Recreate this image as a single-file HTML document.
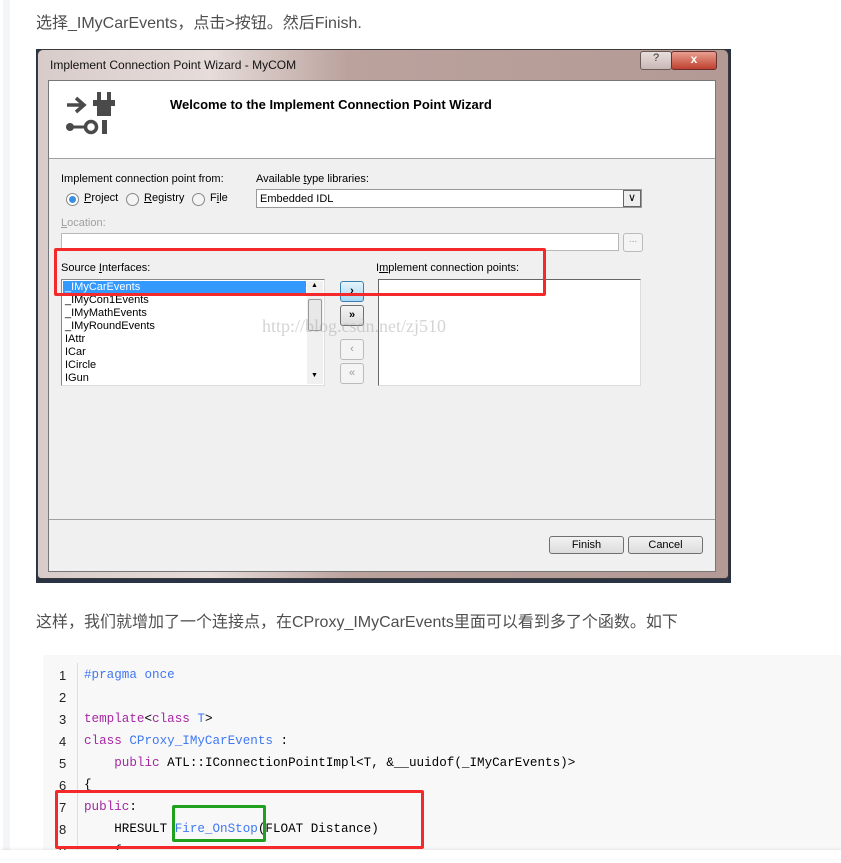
<!DOCTYPE html>
<html><head><meta charset="utf-8"><style>
body{margin:0;width:841px;height:859px;background:#fff;position:relative;overflow:hidden;font-family:"Liberation Sans","Noto Sans CJK SC",sans-serif}
.a{position:absolute}
.t{font-size:11px;font-family:"Liberation Sans",sans-serif;color:#000;white-space:nowrap}
.code{font-family:"Liberation Mono","DejaVu Sans Mono",monospace;font-size:12.6px;color:#000;white-space:pre}
.kw{color:#a626a4}.bl{color:#4078f2}
</style></head><body>
<div class="a" style="left:3px;top:0;width:7px;height:859px;background:#f4f5f7"></div>
<div class="a" style="left:36px;top:9px;font-size:16px;color:#4f4f4f">选择_IMyCarEvents，点击&gt;按钮。然后Finish.</div>

<div class="a" style="left:36px;top:49px;width:695px;height:534px;background:#2a3344"></div>
<div class="a" style="left:37px;top:49px;width:692px;height:530px;border-radius:6px 6px 4px 4px;background:linear-gradient(90deg,#d8ccca 0%,#e6dcda 25%,#bba29d 45%,#b39a95 100%);border:1px solid #3a3a3a;box-sizing:border-box"></div>
<div class="a t" style="left:50px;top:58px;font-size:12px;color:#111">Implement Connection Point Wizard - MyCOM</div>
<div class="a" style="left:640px;top:51px;width:30px;height:17px;border:1px solid #6a5a58;border-radius:3px;background:linear-gradient(#e8dedc,#c8b8b5);font:11px 'Liberation Sans';text-align:center;color:#333">?</div>
<div class="a" style="left:671px;top:51px;width:44px;height:17px;border:1px solid #6a3030;border-radius:3px;background:linear-gradient(#e8a090,#c04030);font:bold 12px 'Liberation Sans';text-align:center;color:#fff">x</div>
<div class="a" style="left:48px;top:80px;width:668px;height:492px;background:#f0f0f0;border:1px solid #777;box-sizing:border-box"></div>
<div class="a" style="left:49px;top:81px;width:666px;height:77px;background:#fff;border-bottom:1px solid #a0a0a0"></div>
<svg class="a" style="left:64px;top:92px" width="58" height="44" viewBox="0 0 58 44">
<g fill="#4a4a4a" stroke="#4a4a4a">
<path d="M3 13h16M12 6l8 7-8 7" fill="none" stroke-width="3.5"/>
<rect x="33" y="0" width="4" height="8" stroke="none"/><rect x="43" y="0" width="4" height="8" stroke="none"/>
<rect x="29" y="8" width="22" height="6" stroke="none"/><rect x="33" y="14" width="14" height="10" stroke="none"/>
<circle cx="6" cy="35" r="4" stroke="none"/><path d="M6 35h14" stroke-width="3"/>
<circle cx="27" cy="35" r="5.5" fill="none" stroke-width="3.5"/>
<rect x="38" y="28" width="5" height="14" stroke="none"/>
</g></svg>
<div class="a t" style="left:170px;top:97px;font-size:13px;font-weight:bold">Welcome to the Implement Connection Point Wizard</div>
<div class="a t" style="left:61px;top:173px">Implement connection point from:</div>
<div class="a t" style="left:256px;top:173px">Available <u>t</u>ype libraries:</div>
<div class="a" style="left:66px;top:193px;width:11px;height:11px;border:1px solid #888;border-radius:50%;background:#fff"><div style="margin:2px;width:7px;height:7px;border-radius:50%;background:#3a8ee0"></div></div>
<div class="a t" style="left:84px;top:192px"><u>P</u>roject</div>
<div class="a" style="left:126px;top:193px;width:11px;height:11px;border:1px solid #888;border-radius:50%;background:#f4f4f4"></div>
<div class="a t" style="left:144px;top:192px"><u>R</u>egistry</div>
<div class="a" style="left:192px;top:193px;width:11px;height:11px;border:1px solid #888;border-radius:50%;background:#f4f4f4"></div>
<div class="a t" style="left:210px;top:192px">F<u>i</u>le</div>
<div class="a" style="left:256px;top:189px;width:386px;height:19px;border:1px solid #999;background:#fff;box-sizing:border-box"></div>
<div class="a t" style="left:260px;top:193px">Embedded IDL</div>
<div class="a" style="left:623px;top:190px;width:18px;height:17px;border:1px solid #666;background:#eee;box-sizing:border-box;font:11px 'DejaVu Sans';text-align:center;line-height:14px">&#x2228;</div>
<div class="a t" style="left:61px;top:217px;color:#a0a0a0"><u>L</u>ocation:</div>
<div class="a" style="left:61px;top:233px;width:558px;height:18px;border:1px solid #b8b8b8;background:#fff;box-sizing:border-box"></div>
<div class="a" style="left:623px;top:233px;width:20px;height:19px;border:1px solid #bbb;border-radius:3px;background:#f4f4f4;box-sizing:border-box;font:10px 'Liberation Sans';color:#999;text-align:center">...</div>
<div class="a t" style="left:61px;top:262px">Source <u>I</u>nterfaces:</div>
<div class="a t" style="left:376px;top:262px">I<u>m</u>plement connection points:</div>
<div class="a" style="left:61px;top:279px;width:264px;height:107px;border:1px solid #888;border-right-color:#ddd;border-bottom-color:#ddd;background:#fff;box-sizing:border-box"></div>
<div class="a" style="left:63px;top:281px;width:243px;height:13px;background:#3399ff"></div>
<div class="a t" style="left:65px;top:281px;line-height:13px;color:#fff">_IMyCarEvents</div>
<div class="a t" style="left:65px;top:294px;line-height:13px">_IMyCon1Events<br>_IMyMathEvents<br>_IMyRoundEvents<br>IAttr<br>ICar<br>ICircle<br>IGun</div>
<div class="a" style="left:307px;top:281px;width:16px;height:103px;background:#f0f0f0"></div>
<div class="a" style="left:308px;top:299px;width:14px;height:32px;border:1px solid #999;border-radius:2px;background:#e8e8e8;box-sizing:border-box"></div>
<div class="a" style="left:311px;top:282px;font-size:7px">▲</div>
<div class="a" style="left:311px;top:372px;font-size:7px">▼</div>
<div class="a" style="left:340px;top:281px;width:24px;height:21px;border:1px solid #3c7fb1;border-radius:3px;background:linear-gradient(#e5f4fc,#a8d8f4);box-sizing:border-box;font:bold 11px 'Liberation Sans';text-align:center;line-height:18px">›</div>
<div class="a" style="left:340px;top:305px;width:24px;height:21px;border:1px solid #707070;border-radius:3px;background:linear-gradient(#f4f4f4,#ddd);box-sizing:border-box;font:bold 11px 'Liberation Sans';text-align:center;line-height:18px">»</div>
<div class="a" style="left:340px;top:339px;width:24px;height:21px;border:1px solid #bbb;border-radius:3px;background:#f4f4f4;box-sizing:border-box;font:11px 'Liberation Sans';color:#999;text-align:center;line-height:18px">‹</div>
<div class="a" style="left:340px;top:363px;width:24px;height:21px;border:1px solid #bbb;border-radius:3px;background:#f4f4f4;box-sizing:border-box;font:11px 'Liberation Sans';color:#999;text-align:center;line-height:18px">«</div>
<div class="a" style="left:378px;top:279px;width:263px;height:107px;border:1px solid #666;border-right-color:#ddd;border-bottom-color:#ddd;background:#fff;box-sizing:border-box"></div>
<div class="a" style="left:262px;top:316px;font:18px 'Liberation Serif',serif;color:rgba(160,160,160,.45)">http://blog.csdn.net/zj510</div>
<div class="a" style="left:54px;top:248px;width:492px;height:48px;border:3px solid #f42a2a;border-radius:2px;box-sizing:border-box"></div>
<div class="a" style="left:49px;top:519px;width:666px;height:1px;background:#a0a0a0"></div>
<div class="a" style="left:549px;top:536px;width:75px;height:18px;border:1px solid #707070;border-radius:3px;background:linear-gradient(#f2f2f2,#dcdcdc);box-sizing:border-box;font:11px 'Liberation Sans';text-align:center;line-height:16px">Finish</div>
<div class="a" style="left:628px;top:536px;width:75px;height:18px;border:1px solid #707070;border-radius:3px;background:linear-gradient(#f2f2f2,#dcdcdc);box-sizing:border-box;font:11px 'Liberation Sans';text-align:center;line-height:16px">Cancel</div>

<div class="a" style="left:36px;top:608px;font-size:16px;color:#4f4f4f">这样，我们就增加了一个连接点，在CProxy_IMyCarEvents里面可以看到多了个函数。如下</div>

<div class="a" style="left:43px;top:655px;width:798px;height:195px;background:#f8f8f8"></div>
<div class="a" style="left:77px;top:663px;width:1px;height:187px;background:#ddd"></div>
<div class="a code" style="left:59px;top:665px;line-height:22px;color:#222;font-family:'Liberation Sans',sans-serif;font-size:13px">1
2
3
4
5
6
7
8
9</div>
<div class="a code" style="left:84px;top:664px;line-height:22px"><span class="bl">#pragma once</span>

<span class="kw">template</span>&lt;<span class="kw">class</span> <span class="bl">T</span>&gt;
<span class="kw">class</span> <span class="bl">CProxy_IMyCarEvents</span> :
    <span class="kw">public</span> ATL::IConnectionPointImpl&lt;T, &amp;__uuidof(_IMyCarEvents)&gt;
{
<span class="kw">public</span>:
    HRESULT <span class="bl">Fire_OnStop</span>(FLOAT Distance)
    {</div>
<div class="a" style="left:0;top:850px;width:841px;height:9px;background:#fff;box-shadow:0 -1px 3px rgba(0,0,0,.08)"></div>
<div class="a" style="left:55px;top:790px;width:369px;height:59px;border:3px solid #f42a2a;border-radius:2px;box-sizing:border-box"></div>
<div class="a" style="left:172px;top:805px;width:94px;height:37px;border:3px solid #1fa01f;border-radius:2px;box-sizing:border-box"></div>
</body></html>
